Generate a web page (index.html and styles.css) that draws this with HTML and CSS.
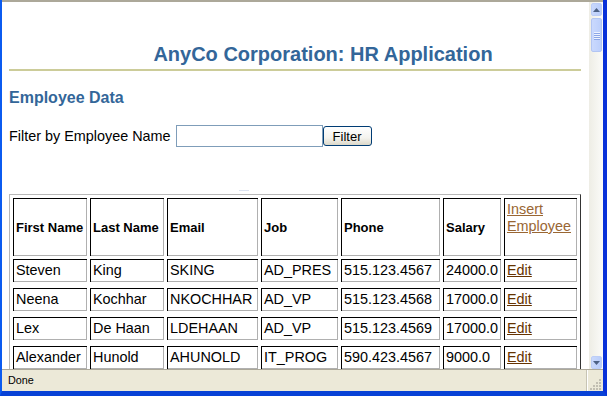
FILE: index.html
```html
<!DOCTYPE html>
<html lang="en">
<head>
    <meta charset="UTF-8">
    <meta name="viewport" content="width=device-width, initial-scale=1.0">
    <title>AnyCo Corp. HR Application</title>
    <link rel="stylesheet" href="styles.css">
</head>
<body>

<div class="window">
    <div class="topline"></div>

    <div class="viewport">
        <div class="page">
            <h1>AnyCo Corporation: HR Application</h1>
            <hr class="rule">

            <h2>Employee Data</h2>

            <form class="filter" action="#">
                <label for="filterName">Filter by Employee Name</label>
                <input type="text" id="filterName" class="filter-input">
                <button type="submit" class="filter-button">Filter</button>
            </form>

            <div class="dash"></div>

            <table class="emp-table">
                <tr class="head">
                    <th class="c-first">First Name</th>
                    <th class="c-last">Last Name</th>
                    <th class="c-email">Email</th>
                    <th class="c-job">Job</th>
                    <th class="c-phone">Phone</th>
                    <th class="c-salary">Salary</th>
                    <th class="c-action"><a href="#" class="insert-link">Insert Employee</a></th>
                </tr>
                <tr>
                    <td>Steven</td>
                    <td>King</td>
                    <td>SKING</td>
                    <td>AD_PRES</td>
                    <td>515.123.4567</td>
                    <td>24000.0</td>
                    <td><a href="#" class="edit-link">Edit</a></td>
                </tr>
                <tr>
                    <td>Neena</td>
                    <td>Kochhar</td>
                    <td>NKOCHHAR</td>
                    <td>AD_VP</td>
                    <td>515.123.4568</td>
                    <td>17000.0</td>
                    <td><a href="#" class="edit-link">Edit</a></td>
                </tr>
                <tr>
                    <td>Lex</td>
                    <td>De Haan</td>
                    <td>LDEHAAN</td>
                    <td>AD_VP</td>
                    <td>515.123.4569</td>
                    <td>17000.0</td>
                    <td><a href="#" class="edit-link">Edit</a></td>
                </tr>
                <tr>
                    <td>Alexander</td>
                    <td>Hunold</td>
                    <td>AHUNOLD</td>
                    <td>IT_PROG</td>
                    <td>590.423.4567</td>
                    <td>9000.0</td>
                    <td><a href="#" class="edit-link">Edit</a></td>
                </tr>
            </table>
        </div>

        <div class="scrollbar">
            <div class="sb-button">
                <svg width="7" height="4" viewBox="0 0 7 4"><path d="M0 4 L3.5 0 L7 4 Z" fill="#4d6185"/></svg>
            </div>
            <div class="sb-thumb">
                <span></span><span></span><span></span><span></span>
            </div>
            <div class="sb-track"></div>
            <div class="sb-button">
                <svg width="7" height="4" viewBox="0 0 7 4"><path d="M0 0 L7 0 L3.5 4 Z" fill="#4d6185"/></svg>
            </div>
        </div>
    </div>

    <div class="statusbar">
        <div class="status-text">Done</div>
        <div class="status-pane">
            <svg width="12" height="12" viewBox="0 0 12 12">
                <g fill="#c2bfb2">
                    <rect x="9" y="1" width="2" height="2"/>
                    <rect x="6" y="4" width="2" height="2"/><rect x="9" y="4" width="2" height="2"/>
                    <rect x="3" y="7" width="2" height="2"/><rect x="6" y="7" width="2" height="2"/><rect x="9" y="7" width="2" height="2"/>
                    <rect x="0" y="10" width="2" height="2"/><rect x="3" y="10" width="2" height="2"/><rect x="6" y="10" width="2" height="2"/><rect x="9" y="10" width="2" height="2"/>
                </g>
            </svg>
        </div>
    </div>
</div>

</body>
</html>
```

FILE: styles.css
```css
* {
    margin: 0;
    padding: 0;
    box-sizing: border-box;
    font-family: "Liberation Sans", Arial, sans-serif;
}

body {
    background-color: #ffffff;
    overflow: hidden;
}

/* browser window frame */
.window {
    width: 607px;
    height: 396px;
    display: flex;
    flex-direction: column;
    border-left: 2px solid #0b5bf0;
    border-right: 4px solid #0831d9;
    border-bottom: 5px solid #0842d6;
}

.topline {
    height: 2px;
    background-color: #aca899;
}

.viewport {
    flex: 1;
    display: flex;
    min-height: 0;
}

.page {
    flex: 1;
    overflow: hidden;
    padding: 0 8px 0 7px;
    background-color: #ffffff;
}

h1 {
    margin-top: 40px;
    padding-left: 56px;
    text-align: center;
    font-size: 20px;
    line-height: 24px;
    font-weight: bold;
    color: #336699;
}

.rule {
    margin-top: 3px;
    height: 2px;
    border: none;
    background-color: #cccc99;
}

h2 {
    margin-top: 17px;
    font-size: 16px;
    line-height: 20px;
    font-weight: bold;
    color: #336699;
}

.filter {
    margin-top: 17px;
    display: flex;
    align-items: center;
    height: 22px;
    font-size: 14.4px;
}

.filter-input {
    margin-left: 5px;
    width: 147px;
    height: 22px;
    border: 1px solid #7f9db9;
    background-color: #ffffff;
}

.filter-button {
    width: 49px;
    height: 20px;
    border: 1px solid #003c74;
    border-radius: 3px;
    background: linear-gradient(#ffffff, #f4f3ee 60%, #dcd8c9);
    font-size: 13px;
    color: #000000;
}

.dash {
    margin: 43px 0 3px 230px;
    width: 10px;
    height: 1px;
    background-color: #dbe2f0;
}

/* employee table */
.emp-table {
    width: 572px;
    table-layout: fixed;
    border-collapse: separate;
    border-spacing: 3px;
    border: 1px solid;
    border-color: #b8b8b8 #333333 #333333 #b8b8b8;
}

.emp-table th,
.emp-table td {
    padding: 3px;
    text-align: left;
    white-space: nowrap;
    box-shadow: inset 1px 1px 0 #000000, inset -1px -1px 0 #b0b0b0;
}

.emp-table th {
    font-size: 13px;
    font-weight: bold;
    vertical-align: middle;
}

.head {
    height: 58px;
}

.emp-table td {
    font-size: 14.4px;
    line-height: 17px;
    height: 26px;
    border-bottom: 3px solid transparent;
}

.c-first { width: 74px; }
.c-last { width: 74px; }
.c-email { width: 91px; }
.c-job { width: 77px; }
.c-phone { width: 99px; }
.c-salary { width: 58px; }
.c-action { width: 73px; }

.emp-table th.c-action {
    vertical-align: top;
    white-space: normal;
    font-weight: normal;
    font-size: 14.4px;
    line-height: 17px;
}

.insert-link {
    color: #996633;
}

.edit-link {
    color: #663300;
}

/* scrollbar */
.scrollbar {
    width: 14px;
    display: flex;
    flex-direction: column;
    padding: 1px 1px 0 2px;
    background: linear-gradient(to right, #eeede5, #fbfbf9);
}

.sb-button {
    height: 13px;
    display: flex;
    justify-content: center;
    align-items: center;
    border: 1px solid #bccdf7;
    border-radius: 2px;
    background: linear-gradient(to right, #c9d8fc, #b9cdfa);
}

.sb-thumb {
    margin-top: 2px;
    height: 34px;
    display: flex;
    flex-direction: column;
    justify-content: center;
    align-items: center;
    gap: 1px;
    border: 1px solid #b2c5f3;
    border-radius: 2px;
    background: linear-gradient(to right, #cad9fd, #bccffb);
}

.sb-thumb span {
    width: 6px;
    height: 1px;
    background-color: #eef3ff;
    box-shadow: 0 1px 0 #8ca6e6;
}

.sb-track {
    flex: 1;
}

/* status bar */
.statusbar {
    height: 22px;
    display: flex;
    background-color: #ece9d8;
    border-top: 1px solid #aca899;
}

.status-text {
    flex: 1;
    padding: 4px 0 0 6px;
    font-size: 10.8px;
    color: #000000;
}

.status-pane {
    width: 17px;
    display: flex;
    align-items: flex-end;
    justify-content: flex-end;
    padding: 0 1px 1px 0;
    border-left: 1px solid #c7c4b4;
    box-shadow: inset 1px 0 0 #ffffff;
}
```
